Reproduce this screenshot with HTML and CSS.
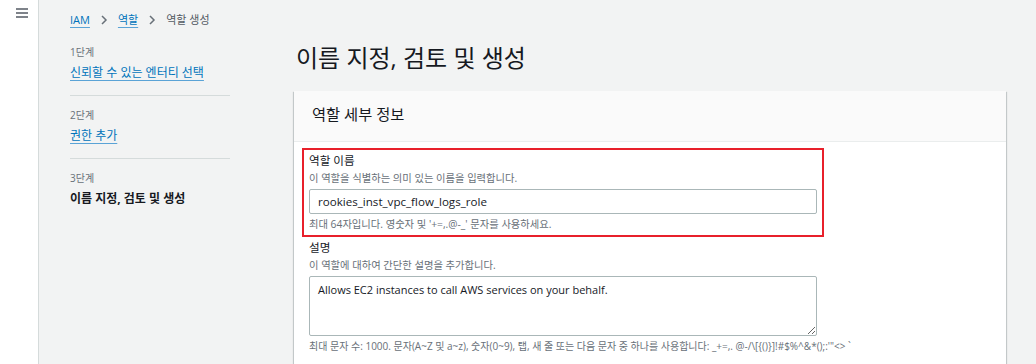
FILE: index.html
```html
<!DOCTYPE html>
<html lang="ko">
<head>
  <meta charset="UTF-8">
  <meta name="viewport" content="width=device-width, initial-scale=1.0">
  <title>역할 생성 - IAM</title>
  <link rel="stylesheet" href="styles.css">
</head>
<body>
  <div class="app">
    <div class="rail">
      <svg class="menu-icon" width="12" height="10" viewBox="0 0 12 10">
        <path d="M0 1h12M0 5h12M0 9h12" stroke="#545b64" stroke-width="1.6" fill="none"/>
      </svg>
    </div>

    <div class="page">
      <nav class="crumbs">
        <a href="#">IAM</a>
        <svg class="chev" width="8" height="10" viewBox="0 0 8 10"><path d="M2 1l4 4-4 4" stroke="#687078" stroke-width="1.5" fill="none"/></svg>
        <a href="#">역할</a>
        <svg class="chev" width="8" height="10" viewBox="0 0 8 10"><path d="M2 1l4 4-4 4" stroke="#687078" stroke-width="1.5" fill="none"/></svg>
        <span>역할 생성</span>
      </nav>

      <div class="layout">
        <ul class="steps">
          <li>
            <div class="step-num">1단계</div>
            <a href="#" class="step-link">신뢰할 수 있는 엔터티 선택</a>
          </li>
          <li>
            <div class="step-num">2단계</div>
            <a href="#" class="step-link">권한 추가</a>
          </li>
          <li>
            <div class="step-num">3단계</div>
            <div class="step-current">이름 지정, 검토 및 생성</div>
          </li>
        </ul>

        <main class="content">
          <h1>이름 지정, 검토 및 생성</h1>

          <section class="card">
            <div class="card-head">역할 세부 정보</div>
            <div class="card-body">
              <div class="highlight">
                <div class="field">
                  <label for="roleName">역할 이름</label>
                  <div class="desc">이 역할을 식별하는 의미 있는 이름을 입력합니다.</div>
                  <input type="text" id="roleName" value="rookies_inst_vpc_flow_logs_role">
                  <div class="hint">최대 64자입니다. 영숫자 및 '+=,.@-_' 문자를 사용하세요.</div>
                </div>
              </div>

              <div class="field">
                <label for="roleDesc">설명</label>
                <div class="desc">이 역할에 대하여 간단한 설명을 추가합니다.</div>
                <textarea id="roleDesc">Allows EC2 instances to call AWS services on your behalf.</textarea>
                <div class="hint hint-long">최대 문자 수: 1000. 문자(A~Z 및 a~z), 숫자(0~9), 탭, 새 줄 또는 다음 문자 중 하나를 사용합니다: _+=,. @-/\[{()}]!#$%^&amp;*();:'"&lt;&gt; `</div>
              </div>
            </div>
          </section>
        </main>
      </div>
    </div>
  </div>
</body>
</html>
```

FILE: styles.css
```css
body {
  margin: 0;
  font-family: 'Open Sans', 'Noto Sans CJK KR', sans-serif;
  color: #16191f;
  background: #f2f3f3;
}
a {
  color: #0073bb;
  text-decoration: underline;
  text-decoration-color: #5aa3d6;
  text-underline-offset: 3px;
}
.app {
  display: flex;
  height: 364px;
  overflow: hidden;
}
.rail {
  width: 38px;
  flex-shrink: 0;
  background: #fff;
  border-right: 1px solid #d5dbdb;
}
.menu-icon {
  display: block;
  margin: 8px 0 0 16px;
}
.page {
  flex: 1;
  padding: 12px 30px 0 31px;
}
.crumbs {
  display: flex;
  align-items: center;
  gap: 9px;
  height: 16px;
  font-size: 11px;
  line-height: 16px;
  color: #545b64;
}
.chev {
  margin: 0 1px;
}
.layout {
  display: flex;
  gap: 64px;
  margin-top: 14px;
}
.steps {
  list-style: none;
  margin: 0;
  padding: 2px 0 0;
  width: 160px;
  flex-shrink: 0;
}
.steps li {
  padding: 11px 0 13px;
  border-bottom: 1px solid #d5dbdb;
}
.steps li:first-child {
  padding-top: 0;
}
.steps li:last-child {
  border-bottom: none;
}
.step-num {
  font-size: 10px;
  line-height: 16px;
  color: #687078;
}
.step-link, .step-current {
  display: inline-block;
  margin-top: 2px;
  font-size: 12px;
  line-height: 16px;
}
.step-current {
  font-weight: bold;
}
.content {
  flex: 1;
}
h1 {
  margin: 0;
  font-size: 24px;
  font-weight: normal;
  line-height: 32px;
  padding-left: 2px;
}
.card {
  margin-top: 17px;
  background: #fff;
  box-shadow: 0 1px 1px 0 rgba(0,28,36,0.3), 1px 1px 1px 0 rgba(0,28,36,0.15), -1px 1px 1px 0 rgba(0,28,36,0.15);
  height: 300px;
}
.card-head {
  background: #fafafa;
  border-bottom: 1px solid #eaeded;
  padding: 13px 18px 17px;
  font-size: 15.3px;
  line-height: 20px;
}
.card-body {
  padding: 6px 15px 0;
}
.highlight {
  width: 508px;
  margin-left: -7px;
  padding: 2px 5px 3px;
  border: 2px solid #e8202b;
}
.field {
  width: 508px;
}
.field label {
  display: block;
  font-size: 11.6px;
  line-height: 18px;
}
.highlight + .field {
  margin-top: 2px;
}
.desc, .hint {
  font-size: 10.3px;
  line-height: 16px;
  color: #687078;
}
.hint {
  margin-top: 2px;
  white-space: nowrap;
}
.hint-long {
  font-size: 10px;
}
input, textarea {
  display: block;
  box-sizing: border-box;
  width: 100%;
  margin: 3px 0 0;
  border: 1px solid #aab7b8;
  border-radius: 2px;
  font-family: 'Open Sans', 'Noto Sans CJK KR', sans-serif;
  color: #16191f;
  padding: 0 8px;
}
input {
  height: 25px;
  font-size: 11.6px;
}
textarea {
  height: 60px;
  padding: 4px 8px;
  font-size: 11px;
  line-height: 18px;
}
```
